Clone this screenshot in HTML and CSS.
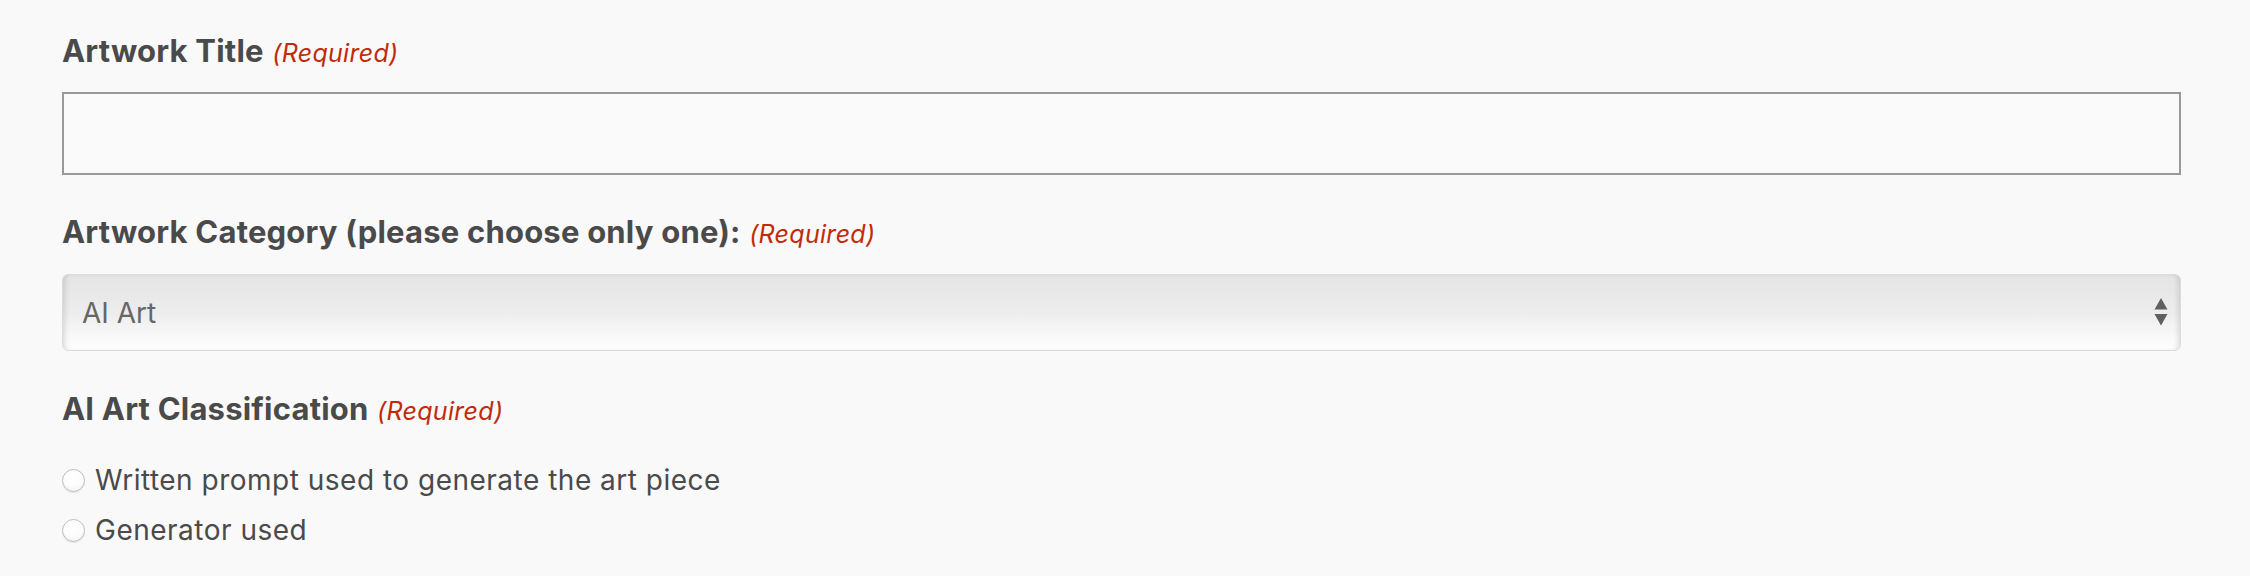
FILE: index.html
```html
<!DOCTYPE html>
<html lang="en">
<head>
<meta charset="utf-8">
<title>Artwork form</title>
<link rel="stylesheet" href="styles.css">
</head>
<body>
<form class="form">
  <div class="field field-title">
    <label class="label" for="title">Artwork Title <span class="req">(Required)</span></label>
    <input class="text-input" id="title" type="text">
  </div>
  <div class="field field-category">
    <label class="label" for="cat">Artwork Category (please choose only one): <span class="req">(Required)</span></label>
    <div class="select-wrap">
      <select class="select" id="cat">
        <option>AI Art</option>
      </select>
      <svg class="select-arrows" width="14" height="30" viewBox="0 0 14 30" aria-hidden="true">
        <path d="M7 0 L13.5 11.5 L0.5 11.5 Z" fill="#606060"/>
        <path d="M0.5 16 L13.5 16 L7 27.5 Z" fill="#606060"/>
      </svg>
    </div>
  </div>
  <div class="field field-radio" role="radiogroup">
    <div class="label">AI Art Classification <span class="req">(Required)</span></div>
    <label class="choice"><input class="radio" type="radio" name="cls"><span>Written prompt used to generate the art piece</span></label>
    <label class="choice"><input class="radio" type="radio" name="cls"><span>Generator used</span></label>
  </div>
</form>
</body>
</html>
```
FILE: styles.css
```css
html, body {
  margin: 0;
  padding: 0;
  background: #f9f9f9;
}

body {
  font-family: Inter, "Noto Sans", "Liberation Sans", sans-serif;
  color: #4a4a4a;
}

.form {
  width: 2119px;
  padding: 33px 0 0 62px;
  display: flex;
  flex-direction: column;
}

.field {
  display: flex;
  flex-direction: column;
  margin: 0;
  padding: 0;
  border: 0;
  min-width: 0;
}

.label {
  display: block;
  padding: 0;
  font-size: 31px;
  line-height: 36px;
  height: 36px;
  font-weight: 700;
  letter-spacing: 0.2px;
  color: #4a4a4a;
}

.req {
  font-size: 25px;
  line-height: 20px;
  font-weight: 400;
  font-style: italic;
  letter-spacing: 0.3px;
  color: #c02b0a;
  margin-left: 1px;
}

.field-title .label {
  margin-bottom: 23px;
}

.text-input {
  box-sizing: border-box;
  width: 100%;
  height: 83px;
  margin: 0;
  border: 2px solid #999;
  background: #fafafa;
  font: inherit;
  outline: none;
}

.field-category {
  margin-top: 39px;
}

.field-category .label {
  margin-bottom: 24px;
}

.select-wrap {
  position: relative;
  height: 77px;
}

.select {
  -webkit-appearance: none;
  appearance: none;
  box-sizing: border-box;
  width: 100%;
  height: 77px;
  margin: 0;
  padding: 0 60px 0 19px;
  border: 1px solid #dcdcdc;
  border-radius: 6px;
  background: linear-gradient(#e4e4e4 0%, #e9e9e9 30%, #ededed 50%, #f8f8f8 80%, #fdfdfd 100%);
  box-shadow: inset 5px 0 5px -3px rgba(0, 0, 0, 0.12), inset -5px 0 5px -3px rgba(0, 0, 0, 0.12);
  font-family: Inter, "Noto Sans", "Liberation Sans", sans-serif;
  font-size: 28px;
  color: #666;
  outline: none;
}

.select-arrows {
  position: absolute;
  right: 13px;
  top: 24px;
  pointer-events: none;
}

.field-radio {
  margin-top: 40px;
}

.field-radio .label {
  margin-bottom: 28px;
}

.choice {
  display: flex;
  align-items: center;
  height: 50px;
  font-size: 28px;
  letter-spacing: 0.5px;
  color: #4a4a4a;
}

.radio {
  -webkit-appearance: none;
  appearance: none;
  box-sizing: border-box;
  width: 23px;
  height: 23px;
  margin: 0 10px 0 0;
  border: 1px solid #bdbdbd;
  border-radius: 50%;
  background: radial-gradient(circle at 50% 35%, #ffffff 0%, #fcfcfc 55%, #ebebeb 100%);
  box-shadow: 0 1px 1px rgba(0, 0, 0, 0.08);
  flex: none;
}
```
